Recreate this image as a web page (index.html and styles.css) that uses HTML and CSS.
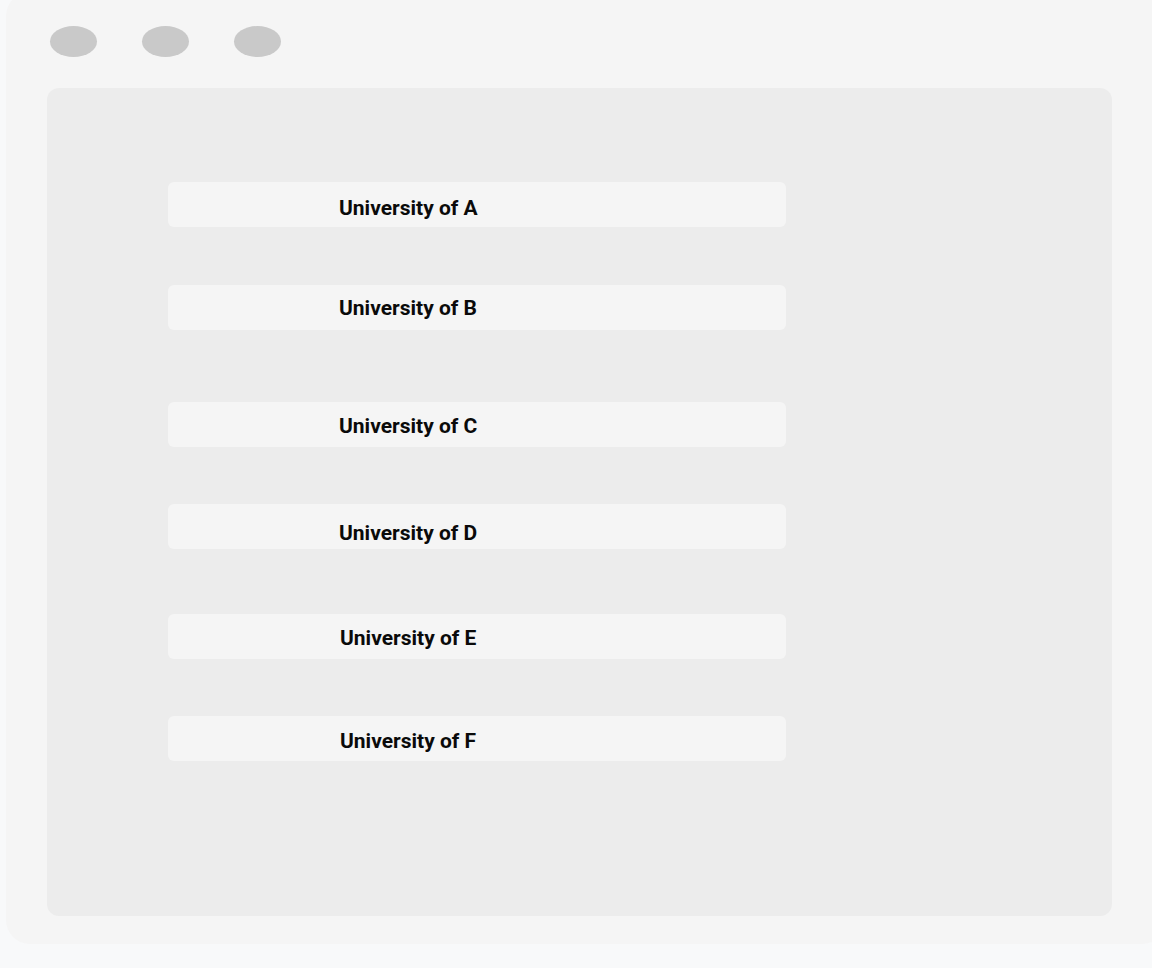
FILE: index.html
```html
<!DOCTYPE html>
<html>
<head>
<meta charset="utf-8">
<link rel="stylesheet" href="styles.css">
</head>
<body>
<div class="frame">
  <div class="dots">
    <span class="dot"></span>
    <span class="dot"></span>
    <span class="dot"></span>
  </div>
  <div class="panel">
    <div class="list">
      <div class="row r1">University of A</div>
      <div class="row r2">University of B</div>
      <div class="row r3">University of C</div>
      <div class="row r4">University of D</div>
      <div class="row r5">University of E</div>
      <div class="row r6">University of F</div>
    </div>
  </div>
</div>
</body>
</html>
```

FILE: styles.css
```css
html, body {
  margin: 0;
  padding: 0;
  background: #f8f9fa;
  overflow: hidden;
}
body {
  font-family: Roboto, "Liberation Sans", sans-serif;
  height: 968px;
}
.frame {
  margin: -8px 0 0 6px;
  width: 1160px;
  height: 952px;
  box-sizing: border-box;
  background: #f5f5f5;
  border-radius: 24px;
  padding: 34px 0 0 44px;
}
.dots {
  display: flex;
  gap: 45px;
  height: 31px;
}
.dot {
  width: 47px;
  height: 31px;
  border-radius: 50%;
  background: #c9c9c9;
}
.panel {
  margin: 31px 0 0 -3px;
  width: 1065px;
  height: 828px;
  background: #ececec;
  border-radius: 12px;
  box-sizing: border-box;
  padding: 94px 0 0 121px;
}
.list {
  display: flex;
  flex-direction: column;
  width: 618px;
}
.row {
  height: 45px;
  box-sizing: border-box;
  background: #f5f5f5;
  border-radius: 6px;
  padding: 11px 0 0 171px;
  font-weight: 700;
  font-size: 21px;
  line-height: 24px;
  color: #0a0a0a;
}
.r1 { padding-top: 14px; }
.r2 { margin-top: 58px; }
.r3 { margin-top: 72px; padding-top: 12px; }
.r4 { margin-top: 57px; padding-top: 17px; }
.r5 { margin-top: 65px; padding-left: 172px; padding-top: 12px; }
.r6 { margin-top: 57px; padding-left: 172px; padding-top: 13px; }
```
